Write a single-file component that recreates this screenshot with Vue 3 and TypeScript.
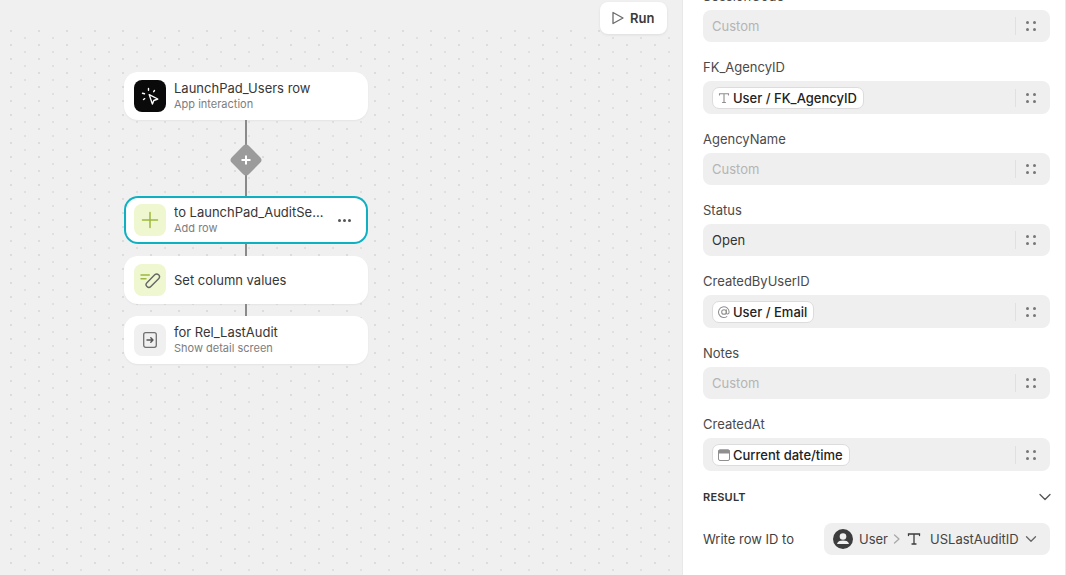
<script setup lang="ts">
interface Field {
  label: string
  kind: 'custom' | 'plain' | 'pill'
  value?: string
  icon?: 'text' | 'at' | 'cal'
}
const fields: Field[] = [
  { label: 'SessionCode', kind: 'custom' },
  { label: 'FK_AgencyID', kind: 'pill', value: 'User / FK_AgencyID', icon: 'text' },
  { label: 'AgencyName', kind: 'custom' },
  { label: 'Status', kind: 'plain', value: 'Open' },
  { label: 'CreatedByUserID', kind: 'pill', value: 'User / Email', icon: 'at' },
  { label: 'Notes', kind: 'custom' },
  { label: 'CreatedAt', kind: 'pill', value: 'Current date/time', icon: 'cal' },
]
</script>

<template>
  <div class="app">
    <main class="canvas">
      <button class="run">
        <svg width="14" height="14" viewBox="0 0 14 14" fill="none"><path d="M2 1.500v11l10-5.500Z" stroke="#6b6b6b" stroke-width="1.300" stroke-linejoin="round"/></svg>
        <span>Run</span>
      </button>
      <div class="flow">
        <div class="node">
          <div class="tile black">
            <svg width="20" height="20" viewBox="0 0 20 20" fill="none" stroke="#fff" stroke-linecap="round" stroke-linejoin="round" stroke-width="1.400">
              <path d="M9.200 8.600 17.800 13l-4 1.500-1.400 3.600Z"/>
              <path d="M8.500 2.500v1.700M14.500 4.500l-.8 1.200M2.500 7.300l2 .5M3.500 13.500l1.200-.8"/>
            </svg>
          </div>
          <div class="txt"><div class="t1">LaunchPad_Users row</div><div class="t2">App interaction</div></div>
        </div>
        <div class="link tall">
          <div class="diamond">
            <svg width="10" height="10" viewBox="0 0 10 10"><path d="M5 .5v9M.5 5h9" stroke="#fff" stroke-width="2"/></svg>
          </div>
        </div>
        <div class="node selected">
          <div class="tile green">
            <svg width="20" height="20" viewBox="0 0 20 20"><path d="M10 2.500v15M2.500 10h15" stroke="#9cb83e" stroke-width="1.500" stroke-linecap="round"/></svg>
          </div>
          <div class="txt narrow"><div class="t1 clip">to LaunchPad_AuditSessions</div><div class="t2">Add row</div></div>
          <div class="more"><i></i><i></i><i></i></div>
        </div>
        <div class="link"></div>
        <div class="node">
          <div class="tile green">
            <svg width="22" height="22" viewBox="0 0 22 22" fill="none" stroke-linecap="round" stroke-linejoin="round">
              <path d="M2 6h8.300M2 9.700h5" stroke="#9cb83e" stroke-width="1.400"/>
              <rect x="5.500" y="9" width="16.500" height="5.500" rx="2.750" transform="rotate(-45 13.700 11.700)" stroke="#666" stroke-width="1.400"/>
            </svg>
          </div>
          <div class="txt"><div class="t1">Set column values</div></div>
        </div>
        <div class="link"></div>
        <div class="node">
          <div class="tile grey">
            <svg width="18" height="18" viewBox="0 0 18 18" fill="none" stroke="#707070" stroke-linecap="round" stroke-linejoin="round">
              <rect x="2.700" y="1.700" width="12.600" height="14.600" rx="2" stroke-width="1.300"/>
              <path d="M6 9h6M9.800 6.800 12 9l-2.200 2.200" stroke="#555" stroke-width="1.400"/>
            </svg>
          </div>
          <div class="txt"><div class="t1">for Rel_LastAudit</div><div class="t2">Show detail screen</div></div>
        </div>
      </div>
    </main>
    <aside class="panel">
      <div class="fields">
        <div v-for="f in fields" :key="f.label" class="field">
          <label>{{ f.label }}</label>
          <div class="input" :class="{ tallinput: f.kind === 'pill' }">
            <div class="val">
              <span v-if="f.kind === 'custom'" class="ph">Custom</span>
              <span v-else-if="f.kind === 'plain'" class="plain">{{ f.value }}</span>
              <span v-else class="pill">
                <svg v-if="f.icon === 'text'" width="14" height="14" viewBox="0 0 14 14" fill="none" stroke="#8f8f8f" stroke-width="1.100" stroke-linecap="round"><path d="M2.500 4V2.800h9V4M7 2.800v8.700M5.500 11.500h3"/></svg>
                <svg v-else-if="f.icon === 'at'" width="14" height="14" viewBox="0 0 15 15" fill="none" stroke="#8f8f8f" stroke-width="1.100" stroke-linecap="round"><circle cx="7.500" cy="7.500" r="2.500"/><path d="M10 5v3.500c0 1.900 3 1.600 3-1A5.700 5.700 0 1 0 10.500 12.400"/></svg>
                <svg v-else width="14" height="14" viewBox="0 0 14 14"><path d="M3 1.500h8a2 2 0 0 1 2 2v2H1v-2a2 2 0 0 1 2-2Z" fill="#8f8f8f"/><rect x="1.500" y="2" width="11" height="10.500" rx="1.500" fill="none" stroke="#8f8f8f"/></svg>
                {{ f.value }}
              </span>
            </div>
            <div class="grip"><i></i><i></i><i></i><i></i></div>
          </div>
        </div>
      </div>
      <div class="result-head">
        <span>RESULT</span>
        <svg width="12" height="12" viewBox="0 0 12 12" fill="none"><path d="M1 3.500 6 8.500l5-5" stroke="#555" stroke-width="1.300" stroke-linecap="round" stroke-linejoin="round"/></svg>
      </div>
      <div class="result-row">
        <span class="rlabel">Write row ID to</span>
        <div class="select">
          <svg width="20" height="20" viewBox="0 0 20 20"><circle cx="10" cy="10" r="10" fill="#3d3d3d"/><circle cx="10" cy="7.500" r="3.300" fill="#f0f0f0"/><path d="M4.200 14.200c.8-2 3-2.700 5.800-2.700s5 .7 5.800 2.700v.8H4.200Z" fill="#f0f0f0"/></svg>
          <span class="u">User</span>
          <svg class="crumb" width="8" height="12" viewBox="0 0 8 12" fill="none"><path d="M1.500 2 6 6l-4.500 4" stroke="#a8a8a8" stroke-width="1.300" stroke-linecap="round" stroke-linejoin="round"/></svg>
          <svg class="ticon" width="14" height="14" viewBox="0 0 14 14" fill="none" stroke="#3d3d3d" stroke-width="1.300" stroke-linecap="round"><path d="M1.500 3.500V2h11v1.500M7 2v10M5 12h4"/></svg>
          <span class="u">USLastAuditID</span>
          <svg class="chev" width="12" height="12" viewBox="0 0 12 12" fill="none"><path d="M1.500 3.800 6 8.300l4.500-4.500" stroke="#666" stroke-width="1.300" stroke-linecap="round" stroke-linejoin="round"/></svg>
        </div>
      </div>
    </aside>
  </div>
</template>

<style>
html, body { margin: 0; overflow: hidden; }
</style>

<style scoped>
.app {
  width: 1066px;
  height: 575px;
  display: flex;
  overflow: hidden;
  font-family: Inter, "Liberation Sans", sans-serif;
  color: #2b2b2b;
}
.canvas {
  position: relative;
  width: 682px;
  flex: none;
  background-color: #f0f0f0;
  background-image:
    radial-gradient(circle, #dcdcdc 1.300px, transparent 1.400px),
    radial-gradient(circle, #e0e0e0 1.300px, transparent 1.400px);
  background-size: 28px 14px;
  background-position: -3px -4px, 11px 3px;
}
.canvas::before {
  content: "";
  position: absolute;
  left: 0;
  right: 0;
  top: 0;
  height: 30px;
  background: #f0f0f0;
}
.run {
  position: absolute;
  top: 2px;
  left: 600px;
  width: 67px;
  height: 32px;
  border: 0;
  border-radius: 8px;
  background: #fff;
  box-shadow: 0 1px 3px rgba(0, 0, 0, .08);
  display: flex;
  align-items: center;
  gap: 5px;
  padding: 0 0 0 11px;
  font: 600 13px Inter, "Liberation Sans", sans-serif;
  color: #3a3a3a;
  box-sizing: border-box;
}
.flow {
  position: relative;
  width: 244px;
  margin-left: 124px;
  padding-top: 72px;
  display: flex;
  flex-direction: column;
}
.node {
  height: 48px;
  box-sizing: border-box;
  background: #fff;
  border-radius: 14px;
  display: flex;
  align-items: center;
  padding: 0 10px;
  gap: 8px;
  box-shadow: 0 1px 2px rgba(0, 0, 0, .05);
}
.selected {
  box-shadow: 0 0 0 2px #0fb0c2 inset;
}
.tile {
  width: 32px;
  height: 32px;
  border-radius: 8px;
  flex: none;
  display: flex;
  align-items: center;
  justify-content: center;
}
.black { background: #0a0a0a; }
.green { background: #eef7d0; }
.grey { background: #f0f0f0; }
.txt { min-width: 0; flex: 1; }
.narrow { flex: none; width: 150px; }
.t1 {
  font-size: 13px;
  line-height: 16px;
  color: #363636;
  white-space: nowrap;
  font-weight: 400;
}
.clip { overflow: hidden; text-overflow: ellipsis; }
.t2 {
  font-size: 11px;
  line-height: 14px;
  color: #7d7d7d;
  margin-top: 1px;
  margin-bottom: 2px;
}
.more {
  margin-left: auto;
  margin-right: 7px;
  display: flex;
  gap: 2px;
}
.more i {
  width: 3px;
  height: 3px;
  border-radius: 50%;
  background: #555;
}
.link {
  width: 2px;
  height: 12px;
  margin-left: 121px;
  background: #8a8a8a;
  position: relative;
}
.tall { height: 76px; }
.diamond {
  position: absolute;
  left: -15px;
  top: 24px;
  width: 32px;
  height: 32px;
  display: flex;
  align-items: center;
  justify-content: center;
}
.diamond::before {
  content: "";
  position: absolute;
  inset: 4px;
  background: #9b9b9b;
  border-radius: 4px;
  transform: rotate(45deg);
}
.diamond svg { position: relative; }
.panel {
  width: 384px;
  flex: none;
  box-sizing: border-box;
  background: #fff;
  border-left: 1px solid #e8e8e8;
  border-right: 1px solid #e8e8e8;
  padding: 0 15px 0 20px;
}
.fields {
  margin-top: -29px;
}
.field label {
  display: block;
  height: 39px;
  line-height: 20px;
  box-sizing: border-box;
  padding-top: 15px;
  font-size: 13px;
  color: #4a4a4a;
}
.input {
  height: 32px;
  background: #efefef;
  border-radius: 8px;
  display: flex;
  align-items: center;
  font-size: 13px;
}
.tallinput { height: 33px; }
.val {
  flex: 1;
  min-width: 0;
  padding-left: 9px;
  display: flex;
  align-items: center;
}
.ph { color: #b4b4b4; }
.plain { color: #333; }
.pill {
  display: inline-flex;
  align-items: center;
  gap: 2px;
  height: 22px;
  box-sizing: border-box;
  padding: 0 6px 0 4px;
  background: #fff;
  border: 1px solid #dcdcdc;
  border-radius: 7px;
  color: #222;
  font-weight: 500;
  font-size: 13px;
}
.grip {
  width: 35px;
  height: 18px;
  flex: none;
  box-sizing: border-box;
  padding-right: 4px;
  border-left: 1px solid #e0e0e0;
  display: grid;
  grid-template-columns: 3px 3px;
  grid-template-rows: 3px 3px;
  gap: 4px 4px;
  align-content: center;
  justify-content: center;
}
.grip i {
  background: #777;
  border-radius: 50%;
}
.result-head {
  margin-top: 16px;
  display: flex;
  align-items: center;
  justify-content: space-between;
  height: 20px;
  font-size: 11px;
  font-weight: 600;
  color: #333;
  letter-spacing: .2px;
}
.result-head svg { margin-right: -1px; }
.result-row {
  margin-top: 16px;
  display: flex;
  align-items: center;
  justify-content: space-between;
}
.rlabel {
  font-size: 13px;
  color: #3f3f3f;
}
.select {
  width: 226px;
  height: 32px;
  box-sizing: border-box;
  background: #efefef;
  border-radius: 8px;
  display: flex;
  align-items: center;
  padding-left: 9px;
  font-size: 13px;
  color: #444;
}
.u { margin-left: 6px; }
.crumb { margin-left: 5px; }
.ticon { margin-left: 6px; }
.select .ticon + .u { margin-left: 9px; }
.chev { margin-left: 6px; }
</style>
